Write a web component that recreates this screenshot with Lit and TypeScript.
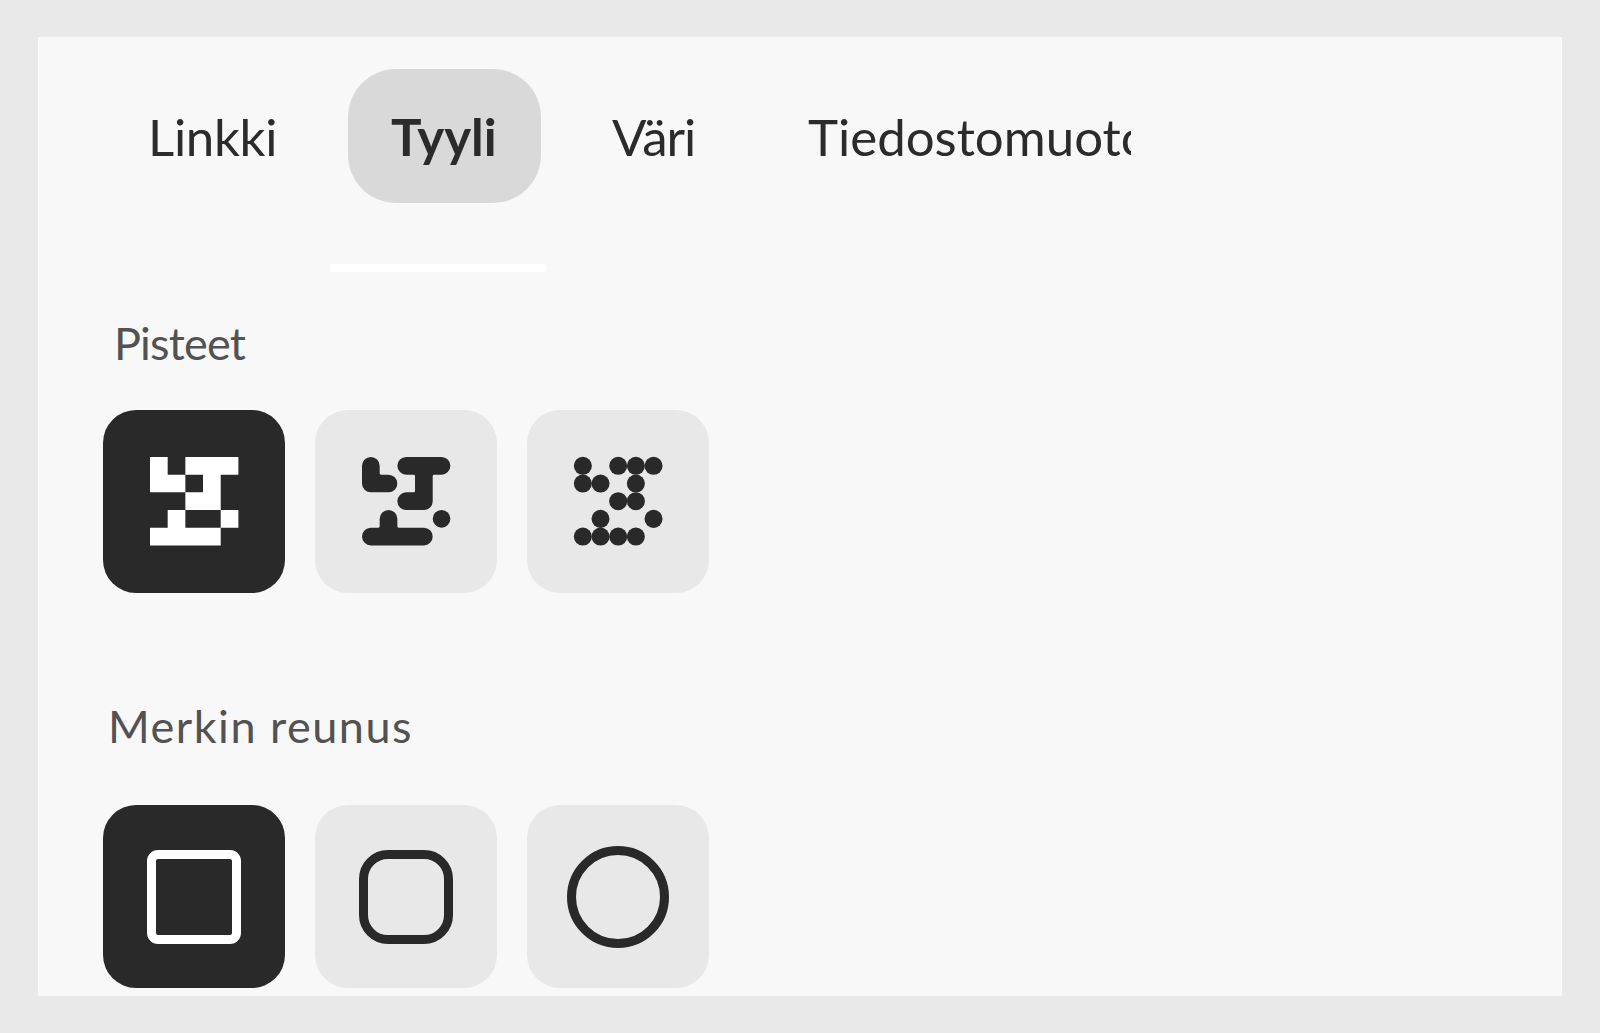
import { LitElement, html, css, svg } from "lit";
import { customElement } from "lit/decorators.js";

const CELLS: [number, number][] = [
  [0, 0], [2, 0], [3, 0], [4, 0],
  [0, 1], [1, 1], [3, 1],
  [2, 2], [3, 2],
  [1, 3], [4, 3],
  [0, 4], [1, 4], [2, 4], [3, 4],
];

const squareDots = svg`<path d="M0 0H1V1H2V2H0ZM2 0H5V1H4V3H2V2H3V1H2ZM1 3H2V4H4V5H0V4H1ZM4 3H5V4H4Z"/>`;
const roundDots = svg`
  <path d="M.5 0A.5 .5 0 0 1 1 .5V.92Q1 1 1.08 1H1.5A.5 .5 0 0 1 1.5 2H.5A.5 .5 0 0 1 0 1.5V.5A.5 .5 0 0 1 .5 0Z"/>
  <path d="M2.5 0H4.5A.5 .5 0 0 1 4.5 1H4.08Q4 1 4 1.08V2.5A.5 .5 0 0 1 3.5 3H2.5A.5 .5 0 0 1 2.5 2H2.92Q3 2 3 1.92V1.08Q3 1 2.92 1H2.5A.5 .5 0 0 1 2.5 0Z"/>
  <path d="M1.5 3A.5 .5 0 0 1 2 3.5V3.92Q2 4 2.08 4H3.5A.5 .5 0 0 1 3.5 5H.5A.5 .5 0 0 1 .5 4H.92Q1 4 1 3.92V3.5A.5 .5 0 0 1 1.5 3Z"/>
  <circle cx="4.5" cy="3.5" r=".5"/>`;
const circleDots = svg`${CELLS.map(([x, y]) => svg`<circle cx=${x + 0.5} cy=${y + 0.5} r=".51"/>`)}`;

@customElement("app-root")
export class AppRoot extends LitElement {
  static styles = css`
    :host {
      display: block;
      box-sizing: border-box;
      height: 1033px;
      padding: 37px 38px;
      background: #e9e9e9;
      font-family: Lato, "Liberation Sans", sans-serif;
      color: #2b2b2b;
    }
    .panel {
      height: 959px;
      box-sizing: border-box;
      background: #f8f8f8;
      padding: 32px 0 0 65px;
      overflow: hidden;
    }
    .tabs {
      display: grid;
      grid-template-columns: 212px 193px 168px 409px;
      column-gap: 28px;
      margin-left: 5px;
    }
    .tab {
      height: 134px;
      padding: 0 43px;
      border-radius: 48px;
      display: flex;
      align-items: center;
      font-size: 51px;
      white-space: nowrap;
    }
    .tab:nth-child(1) {
      padding-left: 40px;
      letter-spacing: -0.3px;
    }
    .tab:nth-child(3) {
      letter-spacing: -1px;
    }
    .tab:nth-child(4) span {
      display: block;
      overflow: hidden;
    }
    .tab.active {
      background: #d9d9d9;
      font-weight: 700;
    }
    .indicator {
      width: 216px;
      height: 8px;
      margin: 61px 0 0 227px;
      background: #fff;
      border-radius: 3px;
    }
    .label {
      font-size: 45px;
      line-height: 54px;
      color: #525252;
    }
    .points { margin: 44px 0 0 11px; letter-spacing: -0.8px; }
    .edge { margin: 106px 0 0 5px; letter-spacing: 1.5px; }
    .options {
      display: flex;
      gap: 30px;
    }
    .points + .options { margin-top: 40px; }
    .edge + .options { margin-top: 52px; }
    .opt {
      width: 182px;
      height: 183px;
      border-radius: 33px;
      background: #e8e8e8;
      color: #292929;
      display: flex;
      align-items: center;
      justify-content: center;
    }
    .opt.on {
      background: #292929;
      color: #fff;
    }
    .dots {
      width: 88.4px;
      height: 88.4px;
      fill: currentColor;
      overflow: visible;
    }
    .frame {
      box-sizing: border-box;
      border: 9px solid currentColor;
    }
    .square { width: 94px; height: 94px; border-radius: 11px; }
    .rounded { width: 94px; height: 94px; border-radius: 29px; }
    .circle { width: 102px; height: 102px; border-radius: 50%; }
  `;

  private tabs = ["Linkki", "Tyyli", "Väri", "Tiedostomuoto"];

  private dots(body: unknown) {
    return html`<svg class="dots" viewBox="0 0 5 5">${body}</svg>`;
  }

  render() {
    return html`
      <div class="panel">
        <div class="tabs">
          ${this.tabs.map(
            (t, i) => html`<div class="tab ${i === 1 ? "active" : ""}"><span>${t}</span></div>`
          )}
        </div>
        <div class="indicator"></div>
        <div class="label points">Pisteet</div>
        <div class="options">
          <div class="opt on">${this.dots(squareDots)}</div>
          <div class="opt">${this.dots(roundDots)}</div>
          <div class="opt">${this.dots(circleDots)}</div>
        </div>
        <div class="label edge">Merkin reunus</div>
        <div class="options">
          <div class="opt on"><div class="frame square"></div></div>
          <div class="opt"><div class="frame rounded"></div></div>
          <div class="opt"><div class="frame circle"></div></div>
        </div>
      </div>
    `;
  }
}
